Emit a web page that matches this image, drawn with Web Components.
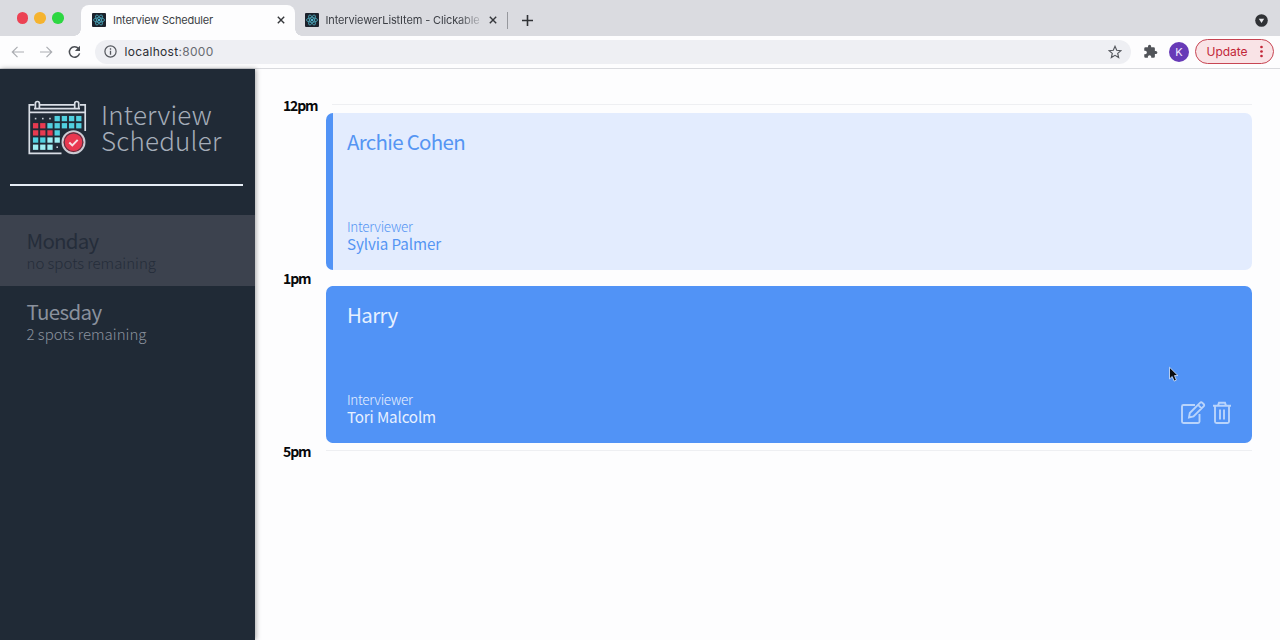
<!DOCTYPE html>
<html lang="en">
<head>
<meta charset="utf-8">
<title>Interview Scheduler</title>
<style>
html,body{margin:0;height:100%;overflow:hidden;background:#fdfdfe}
body{font-family:"Noto Sans CJK JP","Noto Sans",sans-serif}
</style>
</head>
<body>
<app-window></app-window>
<script>
const define = (name, html, setup) => customElements.define(name, class extends HTMLElement {
  connectedCallback() {
    if (this.shadowRoot) return;
    const t = document.createElement('template');
    t.innerHTML = html;
    this.attachShadow({mode: 'open'}).append(document.importNode(t.content, true));
    if (setup) setup(this, this.shadowRoot);
  }
});

/* One line of text, tracked so that it spans the given width. */
define('fit-text', `<style>:host{display:inline-block;white-space:nowrap;flex:none}</style><slot></slot>`, host => {
  queueMicrotask(() => {
    const want = +host.getAttribute('w'), n = host.textContent.length;
    const have = host.getBoundingClientRect().width;
    if (want && have) host.style.letterSpacing = ((want - have) / n).toFixed(3) + 'px';
  });
});

define('react-icon', `<style>:host{display:block;width:14px;height:14px;flex:none}svg{display:block}</style>
<svg width="14" height="14" viewBox="0 0 14 14"><rect width="14" height="14" rx="1" fill="#1c222c"/><g fill="none" stroke="#4fb3c8" stroke-width=".75"><ellipse cx="7" cy="7" rx="5.6" ry="2.2"/><ellipse cx="7" cy="7" rx="5.6" ry="2.2" transform="rotate(60 7 7)"/><ellipse cx="7" cy="7" rx="5.6" ry="2.2" transform="rotate(120 7 7)"/></g><circle cx="7" cy="7" r="1.1" fill="#61dafb"/></svg>`);

define('close-icon', `<style>:host{display:block;width:8px;height:8px;flex:none}svg{display:block}</style>
<svg width="8" height="8" viewBox="0 0 8 8"><path d="M.8.8l6.4 6.4M7.2.8L.8 7.2" stroke="#35373b" stroke-width="1.4"/></svg>`);

define('tab-strip', `<style>
:host{display:flex;box-sizing:border-box;height:36px;background:#dadbe0;align-items:flex-end;font:11px/14px Inter,sans-serif;color:#3c3f45}
.lights{display:flex;gap:6.4px;padding:0 0 12.5px 16.5px;width:56px}
.lights i{width:11.5px;height:11.5px;border-radius:50%;flex:none}
.active{position:relative;display:flex;align-items:center;box-sizing:border-box;width:214px;height:31px;margin-left:8px;padding:0 10px 1px 11px;background:#fdfdfe;border-radius:8px 8px 0 0}
.active::before,.active::after{content:"";position:absolute;bottom:0;width:7px;height:7px}
.active::before{left:-7px;background:radial-gradient(circle at 0 0,transparent 6.5px,#fdfdfe 7px)}
.active::after{right:-7px;background:radial-gradient(circle at 100% 0,transparent 6.5px,#fdfdfe 7px)}
.idle{display:flex;align-items:center;height:31px;padding:0 0 1px 10px;box-sizing:border-box;width:212px;border:0}
.clip{width:154px;overflow:hidden;margin-left:7px;-webkit-mask:linear-gradient(90deg,#000 132px,transparent 160px)}
.title{margin-left:7.500px;flex:1}
.sep{width:1px;height:17px;background:#96989d;margin:0 14px 7px 0}
.plus{margin-bottom:10px;display:block}
.menu{margin:0 12.5px 9.5px auto;display:block}
</style>
<div class="lights"><i style="background:#ec4254"></i><i style="background:#f5b32f"></i><i style="background:#2dd742"></i></div>
<div class="active"><react-icon></react-icon><div class="title"><fit-text w="100">Interview Scheduler</fit-text></div><close-icon></close-icon></div>
<div class="idle"><react-icon></react-icon><div class="clip"><fit-text w="154">InterviewerListItem - Clickable</fit-text></div><close-icon style="margin-left:9.5px"></close-icon></div>
<div class="sep"></div>
<svg class="plus" width="11" height="11"><path d="M5.5 0v11M0 5.5h11" stroke="#303236" stroke-width="1.6"/></svg>
<svg class="menu" width="13" height="13"><circle cx="6.5" cy="6.5" r="6.3" fill="#303236"/><path d="M3.8 4.8h5.4L6.5 9z" fill="#e8e9ed"/></svg>`);

define('tool-bar', `<style>
:host{display:flex;box-sizing:border-box;height:33px;align-items:center;background:#fdfdfe;border-bottom:1px solid #d9dade;padding:0 6px 1px 11px;font:12px/16px Inter,sans-serif}
svg{display:block;flex:none}
.url{display:flex;align-items:center;box-sizing:border-box;width:1036px;height:24px;border-radius:12px;background:#eeeff3;margin-left:12px;padding:0 9px 0 9px;color:#2b2d32}
.url fit-text{margin-left:7.5px}.url span{color:#686b71}
.star{margin-left:auto}
.k{width:20px;height:20px;border-radius:50%;background:#673ab7;color:#f1e8ff;text-align:center;font-size:11px;line-height:20px;margin-left:11px;flex:none}
.up{display:flex;align-items:center;box-sizing:border-box;width:79px;height:25px;border:1.5px solid #c74553;border-radius:13px;background:#f9e3e6;color:#c22638;margin-left:6px;padding:0 10px 0 10.5px;justify-content:space-between}
</style>
<svg width="14" height="14" fill="none" stroke="#abadb2" stroke-width="1.2"><path d="M13 7H1.5M6.5 1.8L1.3 7l5.2 5.2"/></svg>
<svg style="margin-left:14px" width="14" height="14" fill="none" stroke="#abadb2" stroke-width="1.2"><path d="M1 7h11.500M7.500 1.800L12.700 7l-5.200 5.200"/></svg>
<svg style="margin:0 1px 0 14px" width="15" height="14" fill="none"><path d="M11.500 3.500A5.200 5.200 0 1 0 12.600 8.400" stroke="#4c4f55" stroke-width="1.5"/><path d="M13 .8v5.200H7.800z" fill="#4c4f55"/></svg>
<div class="url">
<svg width="13" height="13"><circle cx="6.500" cy="6.500" r="5.600" fill="none" stroke="#54575d" stroke-width="1.200"/><path d="M6.500 5.700v4M6.500 3.300v1.400" stroke="#54575d" stroke-width="1.300"/></svg>
<fit-text w="89">localhost<span>:8000</span></fit-text>
<svg class="star" width="14" height="14" viewBox="0 0 14 14"><path d="M7 1.300l1.700 3.900 4.200.4-3.200 2.800.95 4.100L7 10.300l-3.650 2.200.95-4.100L1.100 5.600l4.200-.4z" fill="none" stroke="#54575d" stroke-width="1.150"/></svg>
</div>
<svg style="margin-left:12px" width="15" height="15" viewBox="0 0 24 24"><path d="M20.500 11H19V7a2 2 0 0 0-2-2h-4V3.500a2.500 2.500 0 0 0-5 0V5H4a2 2 0 0 0-2 2v3.800h1.500a2.700 2.700 0 0 1 0 5.400H2V20a2 2 0 0 0 2 2h3.800v-1.500a2.700 2.700 0 0 1 5.400 0V22H17a2 2 0 0 0 2-2v-4h1.500a2.500 2.500 0 0 0 0-5z" fill="#515459"/></svg>
<div class="k">K</div>
<div class="up"><fit-text w="41">Update</fit-text><svg width="3" height="13" fill="#c22638"><circle cx="1.500" cy="2" r="1.350"/><circle cx="1.500" cy="6.500" r="1.350"/><circle cx="1.500" cy="11" r="1.350"/></svg></div>`);

define('calendar-logo', `<style>:host{display:block;flex:none;width:60px;height:58px}svg{display:block}</style>
<svg width="60" height="58" viewBox="8 9 60 58">
<g fill="none" stroke="#d9dee6" stroke-width="1.700"><path d="M14.500 14.900H9.300V63.400H41.500M20 14.900H54M60 14.900H65.200V41M9 22.400H65M14 18.600H60"/><path d="M15.400 18V13.500a2 2 0 1 1 4 0V18M54.700 18V13.500a2 2 0 1 1 4 0V18"/></g>
<g id="cells"></g>
<circle cx="53.500" cy="52.200" r="11.300" fill="#e93850" stroke="#242d39" stroke-width="3"/>
<circle cx="53.500" cy="52.200" r="11" fill="#e93850" stroke="#c9ccd4" stroke-width="1.900"/>
<circle cx="53.500" cy="52.200" r="9.300" fill="none" stroke="#553443" stroke-width="1.100"/>
<path d="M49.300 52.500l3 2.900 5.400-5.500" fill="none" stroke="#f6dfe3" stroke-width="2"/>
</svg>`, (host, root) => {
  const g = root.getElementById('cells'), fill = {c: '#51d0df', r: '#e73a50', l: '#9eeef2', d: '#c6ccd4'};
  ['dddcccc', 'rrccccc', 'rrrc', 'ccll', 'llld'].forEach((row, y) => [...row].forEach((k, x) => {
    const s = k === 'd' ? 1.6 : 5.3, r = document.createElementNS('http://www.w3.org/2000/svg', 'rect');
    const a = {x: 15.6 + x * 7.2 - s / 2, y: 28.6 + y * 7.15 - s / 2, width: s, height: s, fill: fill[k]};
    for (const p in a) r.setAttribute(p, a[p]);
    g.append(r);
  }));
});

define('day-item', `<style>
:host{display:block;box-sizing:border-box;height:71px;padding:13px 0 0 26.5px;color:#8a919d}
:host([full]){background:#3c424e;color:#252d3a}
.name{font-size:20.5px;line-height:24px;height:26px}
.spots{font-size:15px;line-height:18px;height:18px;font-weight:300}
</style><div class="name"><slot name="name"></slot></div><div class="spots"><slot></slot></div>`);

define('side-bar', `<style>
:host{display:block;width:255px;height:571px;background:#202a36;flex:none;box-shadow:1px 0 5px rgba(0,0,0,.35);z-index:1}
header{display:flex;gap:13.5px;height:115px;box-sizing:border-box;padding:30px 0 0 27.5px}
.brand{font-weight:300;font-size:26px;line-height:26px;color:#a5adb9;padding-top:2px}
.brand fit-text{display:block;width:max-content}
hr{margin:0 12px 0 10px;border:0;height:2px;background:#e6edf5}
nav{padding-top:29px}
</style>
<header><calendar-logo></calendar-logo><div class="brand"><fit-text w="111">Interview</fit-text><fit-text w="120.500">Scheduler</fit-text></div></header>
<hr>
<nav>
<day-item full><fit-text slot="name" w="72">Monday</fit-text><fit-text w="129.500">no spots remaining</fit-text></day-item>
<day-item><fit-text slot="name" w="75">Tuesday</fit-text><fit-text w="120">2 spots remaining</fit-text></day-item>
</nav>`);

define('time-slot', `<style>
:host{display:block}
header{display:flex;height:17px;line-height:19px;font-size:14px;font-weight:700;color:#08090b}
.label{width:43px}
.line{flex:1;height:1px;margin-top:8px;background:#eeeff2}
:host([inset]) .line{margin-left:6px}
:host([plain]) .line{background:transparent}
</style><header><div class="label"><slot name="time"></slot></div><div class="line"></div></header><slot></slot>`);

define('appointment-card', `<style>
:host{display:flex;flex-direction:column;box-sizing:border-box;height:156.500px;margin:0 0 -.5px 43px;padding:15px 20px 16px 14px;border-left:7.500px solid #5193f6;border-radius:7px;background:#e3ecfe;color:#5595f3}
:host([active]){background:#5193f6;color:#e7f0ff}
.name{font-size:20.500px;line-height:27px}
.foot{margin-top:auto;display:flex;align-items:flex-end;justify-content:space-between}
.role{font-size:13.500px;line-height:17px;height:17px;font-weight:300}
.who{font-size:15.200px;line-height:17px;height:19px}
svg{display:none}
:host([active]) svg{display:block;margin-bottom:2px}
</style>
<div class="name"><slot name="name"></slot></div>
<div class="foot"><div><div class="role"><fit-text w="65.500">Interviewer</fit-text></div><div class="who"><slot></slot></div></div>
<svg width="52" height="25" viewBox="0 0 52 25" fill="none" stroke="#b9d4fb" stroke-width="1.900">
<path d="M15 5H3.500Q2 5 2 6.500V21.500Q2 23 3.500 23H18Q19.500 23 19.500 21.500V14"/>
<path d="M9 17.500l.8-4.500L20 2.800q1.200-1.200 2.400 0l1.200 1.200q1.200 1.200 0 2.400L13.500 16.500zM18 4.800l3.600 3.600"/>
<path d="M33 5.800H51M35 6V21.500Q35 23 36.500 23H47.500Q49 23 49 21.500V6M38 5.500L39 2.800H45L46 5.500M40 9.500V19.500M44 9.500V19.500"/>
</svg></div>`);

define('schedule-view', `<style>
:host{display:block;flex:1;padding:27px 28px 0;background:#fdfdfe}
</style>
<time-slot inset><fit-text slot="time" w="34.500">12pm</fit-text><appointment-card><fit-text slot="name" w="118">Archie Cohen</fit-text><fit-text w="94">Sylvia Palmer</fit-text></appointment-card></time-slot>
<time-slot plain><fit-text slot="time" w="27.500">1pm</fit-text><appointment-card active><fit-text slot="name" w="50.500">Harry</fit-text><fit-text w="89">Tori Malcolm</fit-text></appointment-card></time-slot>
<time-slot><fit-text slot="time" w="27.500">5pm</fit-text></time-slot>`);

define('app-window', `<style>
:host{display:block;width:1280px;height:640px;overflow:hidden;position:relative}
main{display:flex}
.cursor{position:absolute;left:1168px;top:366px}
</style>
<tab-strip></tab-strip><tool-bar></tool-bar>
<main><side-bar></side-bar><schedule-view></schedule-view></main>
<svg class="cursor" width="13" height="18" viewBox="0 0 13 18"><path d="M1.500 1.200V13l2.700-2.500 1.900 4.600 2.300-1-1.900-4.500H10z" fill="#0b0d10" stroke="#c6daf8" stroke-width=".9"/></svg>`);
</script>
</body>
</html>
